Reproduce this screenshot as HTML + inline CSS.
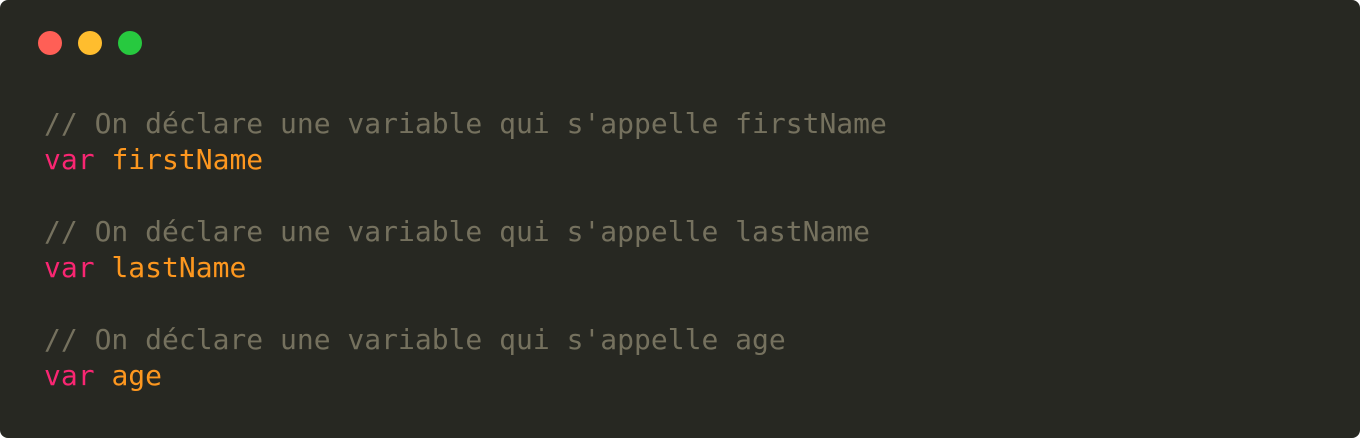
<!DOCTYPE html>
<html><head><style>
html,body{margin:0;padding:0;background:#fff;}
.win{position:absolute;left:0;top:0;width:1360px;height:438px;background:#272822;border-radius:8px;overflow:hidden;}
.dot{position:absolute;top:31px;width:24px;height:24px;border-radius:50%;}
pre{position:absolute;left:44px;top:106px;margin:0;font-family:"DejaVu Sans Mono","Liberation Mono",monospace;font-size:28px;line-height:36px;color:#f8f8f2;}
.c{color:#75715e}.k{color:#f92672}.v{color:#fd971f}
</style></head><body>
<div class="win">
<div class="dot" style="left:38px;background:#ff5f56"></div>
<div class="dot" style="left:78px;background:#ffbd2e"></div>
<div class="dot" style="left:118px;background:#27c93f"></div>
<pre><span class="c">// On déclare une variable qui s'appelle firstName</span>
<span class="k">var</span> <span class="v">firstName</span>

<span class="c">// On déclare une variable qui s'appelle lastName</span>
<span class="k">var</span> <span class="v">lastName</span>

<span class="c">// On déclare une variable qui s'appelle age</span>
<span class="k">var</span> <span class="v">age</span></pre>
</div>
</body></html>
